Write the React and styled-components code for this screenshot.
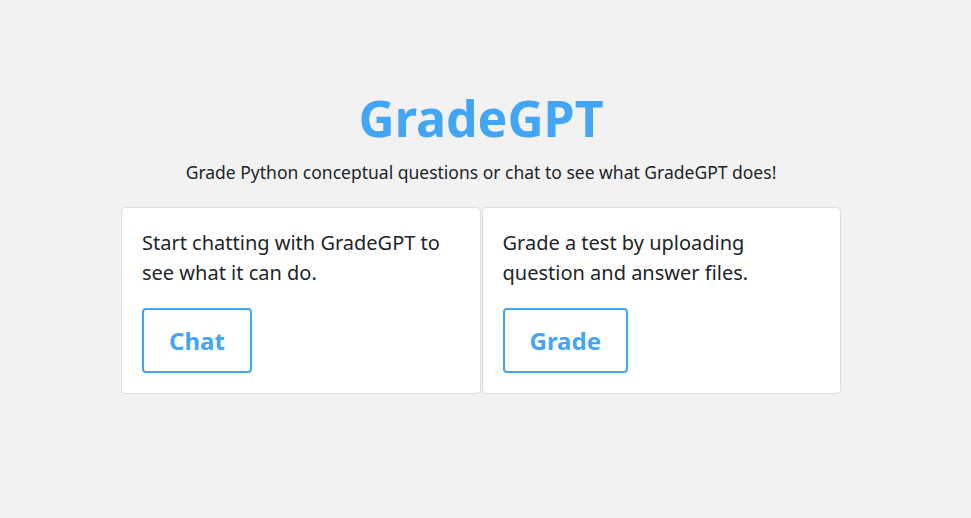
import React from "react";
import styled, { createGlobalStyle } from "styled-components";

const GlobalStyle = createGlobalStyle`
  html, body {
    margin: 0;
    padding: 0;
    background: #f2f2f2;
    font-family: 'Noto Sans', 'Open Sans', sans-serif;
    color: #212529;
  }
`;

const Page = styled.div`
  min-height: 100vh;
  display: flex;
  flex-direction: column;
  align-items: center;
  padding: 83px 9px 0 0;
  box-sizing: border-box;
`;

const Title = styled.h1`
  margin: 0;
  font-size: 50px;
  font-weight: 700;
  line-height: 70px;
  color: #42a5f5;
`;

const Subtitle = styled.p`
  margin: 6px 0 0;
  font-size: 17.5px;
  line-height: 26px;
  color: #212529;
`;

const CardRow = styled.div`
  display: flex;
  gap: 1px;
  margin-top: 22px;
`;

const Card = styled.div`
  width: 359.5px;
  box-sizing: border-box;
  background: #fff;
  border: 1px solid #dedede;
  border-radius: 4px;
  padding: 20px;
`;

const CardText = styled.p`
  margin: 0 0 20px;
  font-size: 20px;
  line-height: 30px;
  color: #212529;
`;

const ActionButton = styled.button`
  font-family: inherit;
  font-size: 24px;
  font-weight: 700;
  color: #42a5f5;
  background: #fff;
  border: 2px solid #42a5f5;
  border-radius: 4px;
  height: 65px;
  padding: 0 25px;
  cursor: pointer;
`;

const cards = [
  { text: "Start chatting with GradeGPT to see what it can do.", label: "Chat" },
  { text: "Grade a test by uploading question and answer files.", label: "Grade" },
];

const App = () => {
  return (
    <>
      <GlobalStyle />
      <Page>
        <Title>GradeGPT</Title>
        <Subtitle>Grade Python conceptual questions or chat to see what GradeGPT does!</Subtitle>
        <CardRow>
          {cards.map((c) => (
            <Card key={c.label}>
              <CardText>{c.text}</CardText>
              <ActionButton>{c.label}</ActionButton>
            </Card>
          ))}
        </CardRow>
      </Page>
    </>
  );
};

export default App;
